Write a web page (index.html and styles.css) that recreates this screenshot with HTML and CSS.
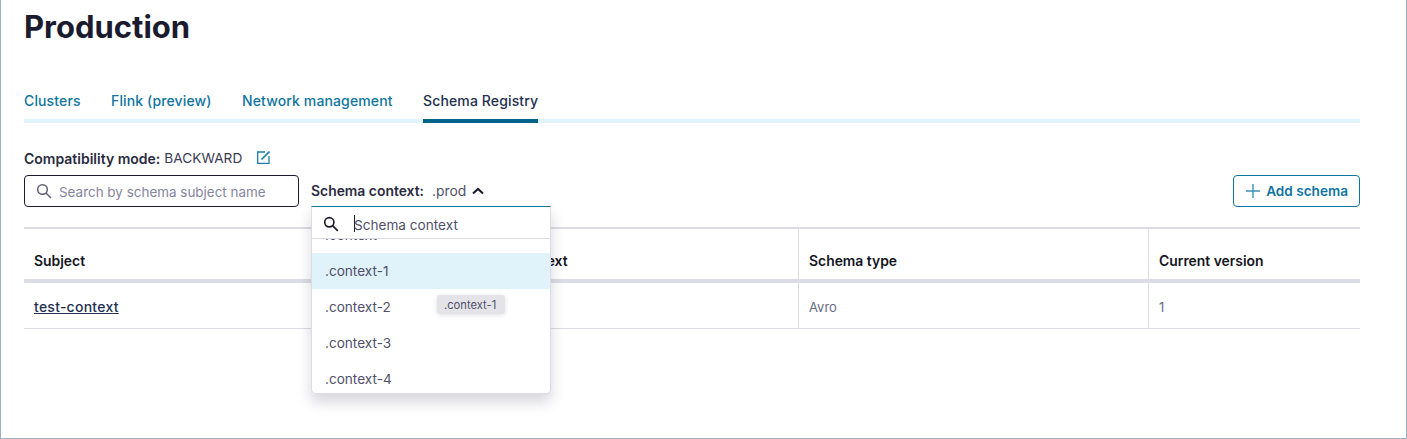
FILE: index.html
```html
<!DOCTYPE html>
<html lang="en">
<head>
<meta charset="utf-8">
<title>Production</title>
<link rel="stylesheet" href="styles.css">
</head>
<body>
<main class="page">
  <h1 class="title">Production</h1>
  <nav class="tabs">
    <a class="tab">Clusters</a>
    <a class="tab">Flink (preview)</a>
    <a class="tab">Network management</a>
    <a class="tab tab-active">Schema Registry</a>
  </nav>
  <div class="mode">
    <span class="mode-label">Compatibility mode:</span>
    <span class="mode-value">BACKWARD</span>
    <svg class="edit-icon" width="13" height="13" viewBox="0 0 13 13" fill="none" stroke="#1d7fa8" stroke-width="1.3"><path d="M8 1H.7v11.3H12V5"/><path d="M4.5 8.5L12.5.5" stroke-width="1.7"/></svg>
  </div>
  <div class="toolbar">
    <label class="search">
      <svg width="16" height="16" viewBox="0 0 16 16" fill="none" stroke="#5f5f78" stroke-width="1.5"><circle cx="6.5" cy="6.5" r="4.8"/><path d="M10 10l5 5"/></svg>
      <span class="search-text">Search by schema subject name</span>
    </label>
    <div class="context">
      <span class="context-label">Schema context:</span>
      <span class="context-value">.prod</span>
      <svg width="12" height="8" viewBox="0 0 12 8" fill="none" stroke="#1b1b2f" stroke-width="2"><path d="M1 6.5l5-4.6 5 4.6"/></svg>
      <div class="dropdown">
        <div class="dd-search">
          <svg width="16" height="16" viewBox="0 0 16 16" fill="none" stroke="#1b1b2f" stroke-width="1.7"><circle cx="6.3" cy="6.3" r="4.6"/><path d="M9.8 9.8l5 5"/></svg>
          <span class="caret"></span><span class="dd-placeholder">Schema context</span>
        </div>
        <div class="dd-list">
          <div class="dd-clip"><div class="dd-item dd-clip-text">.context</div></div>
          <div class="dd-item dd-item-active">.context-1</div>
          <div class="dd-item">.context-2</div>
          <div class="dd-item">.context-3</div>
          <div class="dd-item">.context-4</div>
        </div>
        <div class="tooltip">.context-1</div>
      </div>
    </div>
    <button class="add-btn">
      <svg width="14" height="14" viewBox="0 0 14 14" fill="none" stroke="#3d93b8" stroke-width="1.4"><path d="M7 0v14M0 7h14"/></svg>
      Add schema
    </button>
  </div>
  <div class="table">
    <div class="cell head first">Subject</div>
    <div class="cell head">Schema context</div>
    <div class="cell head">Schema type</div>
    <div class="cell head">Current version</div>
    <div class="cell body first"><a class="link">test-context</a></div>
    <div class="cell body">.prod</div>
    <div class="cell body">Avro</div>
    <div class="cell body">1</div>
  </div>
</main>
</body>
</html>
```
FILE: styles.css
```css
* { box-sizing: border-box; }
html, body { margin: 0; height: 100%; background: #fff; }
body { font-family: Inter, "Liberation Sans", sans-serif; color: #1b1b2f; overflow: hidden; }
.page {
  width: 1407px; height: 439px;
  border: 1px solid #9ab5c5; border-top: 0;
  padding: 0 46px 0 23px;
}
.title { margin: 0; padding-top: 9px; font-size: 31px; line-height: 36px; font-weight: 700; color: #1b1b2f; }
.tabs { display: flex; gap: 30.4px; margin-top: 46px; border-bottom: 4px solid #e0f2fa; height: 32px; }
.tab { height: 32px; font-size: 14px; line-height: 20px; font-weight: 500; color: #1075a0; letter-spacing: 0.13px; }
.tab-active { color: #22304f; border-bottom: 4px solid #00618a; }
.mode { display: flex; align-items: center; height: 20px; margin-top: 25px; font-size: 14px; }
.mode-label { font-weight: 600; color: #2b2b40; }
.mode-value { margin-left: 4px; color: #3c3c52; font-size: 13.7px; }
.edit-icon { margin-left: 15px; margin-top: -1px; }
.toolbar { display: flex; align-items: flex-start; margin-top: 7px; height: 32px; }
.search {
  display: flex; align-items: center; gap: 7px; width: 275px; height: 32px;
  padding: 0 11px; border: 1px solid #1b1b2f; border-radius: 4px;
}
.search-text { font-size: 13.45px; padding-top: 2px; color: #85859c; }
.context { position: relative; display: flex; align-items: center; height: 32px; margin-left: 12px; font-size: 13.9px; }
.context-label { font-weight: 600; color: #2b2b40; }
.context-value { margin-left: 8px; margin-right: 6px; color: #50506a; }
.dropdown {
  position: absolute; left: 0; top: 31px; z-index: 2; width: 240px; height: 188px;
  background: #fff; border: 1px solid #dcdce4; border-top: 1px solid #1075a0; border-radius: 0 0 5px 5px;
  box-shadow: 0 8px 14px rgba(30,30,60,.18);
}
.dd-search { display: flex; align-items: center; height: 32px; padding-left: 11px; padding-top: 2px; border-bottom: 1px solid #dcdce4; }
.caret { width: 1px; height: 17px; margin-left: 15px; background: #1b1b2f; }
.dd-placeholder { font-size: 13.6px; padding-top: 2px; color: #50506a; margin-left: -1px; }
.dd-list { font-size: 13.6px; color: #50506a; }
.dd-clip { position: relative; height: 14px; overflow: hidden; }
.dd-clip-text { position: absolute; left: 0; bottom: 0; }
.dd-item { height: 36px; padding-left: 13px; line-height: 36px; }
.dd-item-active { background: #e0f2fa; }
.tooltip {
  position: absolute; left: 125px; top: 88px; width: 68px; height: 19px; padding: 1px 7px 0;
  font-size: 11.2px; line-height: 19px; color: #50506a; background: #e4e3e8; border-radius: 3px;
  box-shadow: 0 1px 5px rgba(30,30,60,.14);
}
.add-btn {
  display: flex; align-items: center; gap: 6px; height: 32px; padding: 0 11px 0 12px; margin-left: auto;
  background: #fff; border: 1px solid #1075a0; border-radius: 4px;
  font: 600 13.6px Inter, "Liberation Sans", sans-serif; color: #1075a0;
}
.table {
  display: grid; grid-template-columns: 424px 350px 350px 212px; grid-template-rows: 54px 46px;
  margin-top: 20px; border-top: 2px solid #dcdce4;
}
.cell { display: flex; align-items: center; padding-left: 10px; font-size: 13px; color: #6a6a80; border-left: 1px solid #dcdce4; }
.first { border-left: 0; }
.head { font-weight: 600; font-size: 13.9px; color: #15151f; border-bottom: 4px solid #dcdce4; padding-top: 13px; }
.body { border-bottom: 1px solid #dcdce4; padding-top: 2px; }
.link { font-size: 14px; font-weight: 500; color: #22304f; text-decoration: underline; letter-spacing: 0.25px; }
```
